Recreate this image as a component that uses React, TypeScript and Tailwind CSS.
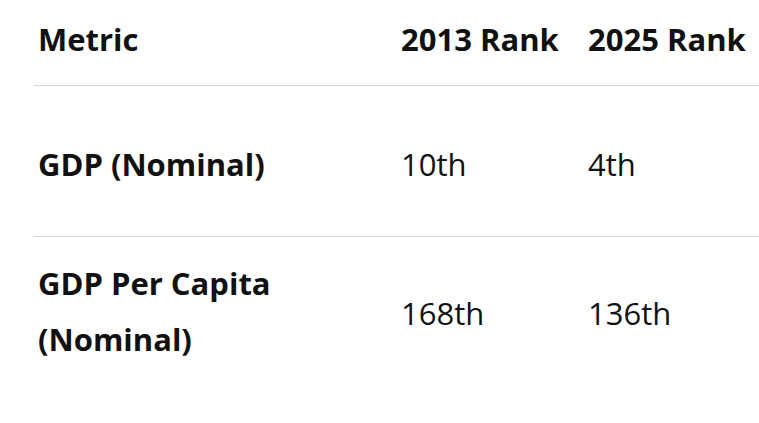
import React from "react";

type Row = {
  metric: string[];
  r2013: string;
  r2025: string;
};

const rows: Row[] = [
  { metric: ["GDP (Nominal)"], r2013: "10th", r2025: "4th" },
  { metric: ["GDP Per Capita", "(Nominal)"], r2013: "168th", r2025: "136th" },
];

const App: React.FC = () => {
  return (
    <div
      className="w-[759px] h-[423px] overflow-hidden bg-white text-[#111111]"
      style={{ fontFamily: '"Open Sans", "Noto Sans", sans-serif' }}
    >
      <table className="ml-[34px] w-[750px] table-fixed border-collapse text-[31px] leading-[56px]">
        <colgroup>
          <col className="w-[363px]" />
          <col className="w-[187px]" />
          <col className="w-[200px]" />
        </colgroup>
        <thead>
          <tr className="border-b border-[#d6d6d6]">
            <th className="pl-[4px] pt-[11px] pb-[18px] text-left align-top font-bold">
              Metric
            </th>
            <th className="pl-[4px] pt-[11px] pb-[18px] text-left align-top font-bold whitespace-nowrap">
              2013 Rank
            </th>
            <th className="pl-[4px] pt-[11px] pb-[18px] text-left align-top font-bold whitespace-nowrap">
              2025 Rank
            </th>
          </tr>
        </thead>
        <tbody>
          <tr className="border-b border-[#d6d6d6]">
            <td className="pl-[4px] pt-[50px] pb-[44px] align-top font-bold">
              {rows[0].metric[0]}
            </td>
            <td className="pl-[4px] pt-[50px] pb-[44px] align-top">{rows[0].r2013}</td>
            <td className="pl-[4px] pt-[50px] pb-[44px] align-top">{rows[0].r2025}</td>
          </tr>
          <tr>
            <td className="pl-[4px] pt-[18px] pb-[40px] align-top font-bold">
              {rows[1].metric.map((line) => (
                <div key={line}>{line}</div>
              ))}
            </td>
            <td className="pl-[4px] pt-[48px] align-top">{rows[1].r2013}</td>
            <td className="pl-[4px] pt-[48px] align-top">{rows[1].r2025}</td>
          </tr>
        </tbody>
      </table>
    </div>
  );
};

export default App;
